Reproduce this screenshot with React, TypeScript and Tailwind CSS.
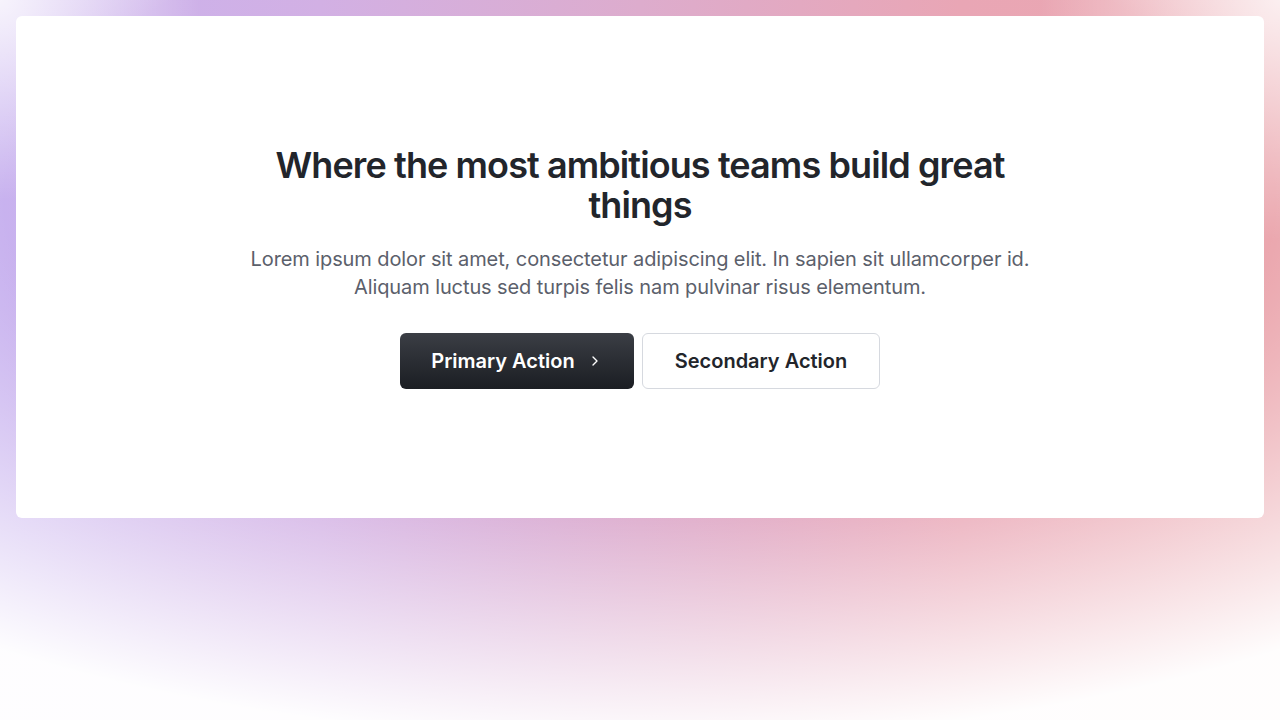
import { ChevronRight } from "lucide-react";

export default function App() {
    return (
        <div
            className="min-h-[720px] w-full p-4 font-['Inter','Liberation_Sans',sans-serif] bg-[radial-gradient(circle_at_0%_0%,rgba(255,255,255,0.8)_0px,rgba(255,255,255,0)_200px),radial-gradient(circle_at_100%_0%,rgba(255,255,255,0.75)_0px,rgba(255,255,255,0)_240px),radial-gradient(ellipse_90%_75%_at_50%_28%,rgba(255,255,255,0)_55%,rgba(255,255,255,0.98)_100%),linear-gradient(to_right,#c8b2ef_0%,#d2b0e4_25%,#ddaccd_50%,#e9a6b5_75%,#eba7ae_100%)]"
        >
            <div className="h-[502px] w-full rounded-md bg-white flex items-center justify-center">
                <div className="w-[800px] flex flex-col items-center text-center">
                    <h1 className="w-[760px] text-[36px] leading-[40px] font-semibold tracking-[-0.025em] text-[#22252b]">
                        Where the most ambitious teams build great things
                    </h1>
                    <p className="mt-5 w-[800px] text-[20px] leading-[28px] tracking-[-0.005em] text-[#5b606b]">
                        Lorem ipsum dolor sit amet, consectetur adipiscing elit. In sapien sit ullamcorper id.
                        Aliquam luctus sed turpis felis nam pulvinar risus elementum.
                    </p>
                    <div className="mt-8 flex gap-2">
                        <button className="h-14 w-[234px] rounded-md bg-gradient-to-b from-[#3b3e45] to-[#1b1e23] text-white text-[20px] font-semibold flex items-center justify-center gap-3">
                            Primary Action
                            <ChevronRight className="w-4 h-4" strokeWidth={2} />
                        </button>
                        <button className="h-14 w-[238px] rounded-md border border-[#d6d9df] bg-white text-[#22252b] text-[20px] font-semibold">
                            Secondary Action
                        </button>
                    </div>
                </div>
            </div>
        </div>
    );
}
